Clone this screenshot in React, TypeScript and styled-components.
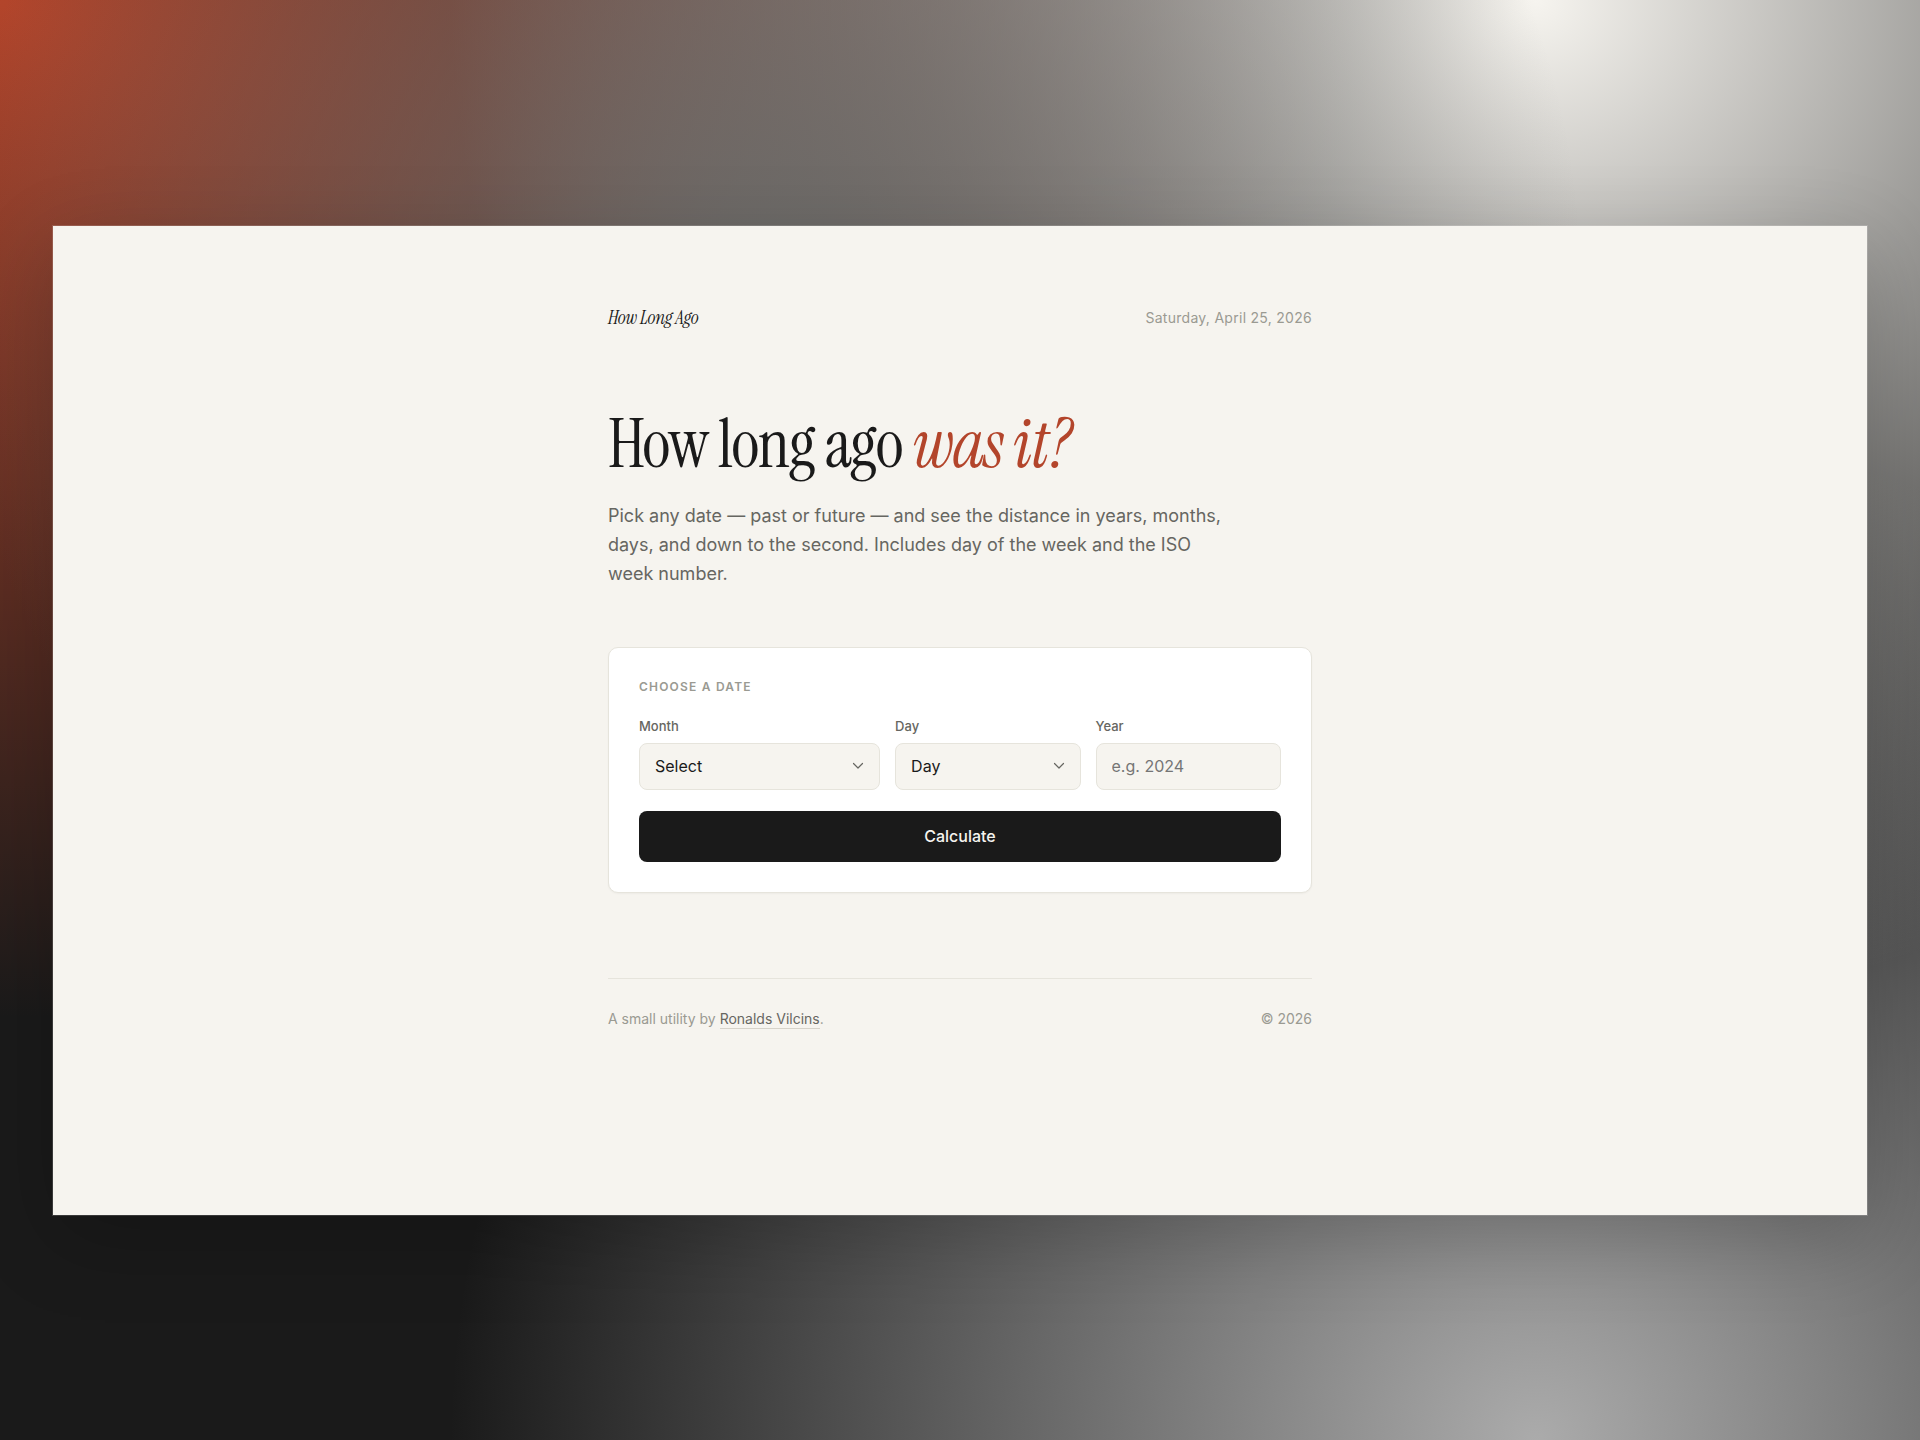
import React, { useState } from "react";
import styled, { createGlobalStyle } from "styled-components";

const ink = "#1a1a1a";
const paper = "#f6f4ef";
const accent = "#b3452b";
const muted = "#666661";
const faint = "#9a9a92";
const line = "#e6e4dc";
const sans = `Inter, "Liberation Sans", sans-serif`;
const serif = `"Instrument Serif", "Liberation Serif", serif`;

const GlobalStyle = createGlobalStyle`
  *, *::before, *::after { box-sizing: border-box; }
  body {
    margin: 0;
    font-family: ${sans};
    color: ${ink};
    -webkit-font-smoothing: antialiased;
  }
`;

const Backdrop = styled.div`
  min-height: 100vh;
  padding: 53px;
  display: grid;
  align-items: center;
  background-color: ${ink};
  background-image:
    radial-gradient(at 40% 20%, #6b6b69 0, transparent 50%),
    radial-gradient(at 80% 0%, ${paper} 0, transparent 50%),
    radial-gradient(at 80% 100%, #ababab 0, transparent 50%),
    radial-gradient(at 0% 0%, ${accent} 0, transparent 50%);
`;

const Sheet = styled.div`
  padding: 77px 32px 186px;
  background: ${paper};
  box-shadow:
    0 0 0 1px rgba(255, 255, 255, 0.15),
    0 24px 80px rgba(0, 0, 0, 0.2);
`;

const Column = styled.div`
  max-width: 704px;
  margin: 0 auto;
`;

const Header = styled.header`
  display: flex;
  justify-content: space-between;
  align-items: center;
  margin-bottom: 75px;
`;

const Brand = styled.span`
  font-family: ${serif};
  font-style: italic;
  font-size: 19px;
  line-height: 30px;
  letter-spacing: -0.01em;
`;

const Today = styled.time`
  font-size: 14px;
  line-height: 20px;
  letter-spacing: 0.02em;
  color: ${faint};
`;

const Title = styled.h1`
  margin: 0 0 21px;
  font-family: ${serif};
  font-weight: 400;
  font-size: 68px;
  line-height: 72px;
  letter-spacing: -0.02em;

  em {
    color: ${accent};
  }
`;

const Lead = styled.p`
  margin: 0 0 59px;
  max-width: 620px;
  font-size: 18px;
  line-height: 29px;
  color: ${muted};
`;

const Panel = styled.form`
  padding: 29px 30px 30px;
  background: #fff;
  border: 1px solid ${line};
  border-radius: 10px;
  box-shadow: 0 1px 2px rgba(0, 0, 0, 0.04);
`;

const Legend = styled.h2`
  margin: 0 0 19px;
  font-size: 12px;
  line-height: 20px;
  font-weight: 600;
  letter-spacing: 0.1em;
  text-transform: uppercase;
  color: ${faint};
`;

const Fields = styled.div`
  display: grid;
  grid-template-columns: 1.3fr 1fr 1fr;
  gap: 15px;
  margin-bottom: 21px;
`;

const Field = styled.div`
  display: flex;
  flex-direction: column;
  gap: 7px;
`;

const Label = styled.label`
  font-size: 13px;
  line-height: 20px;
  font-weight: 500;
  color: ${muted};
`;

const SelectWrap = styled.div`
  display: grid;
  align-items: center;

  > * {
    grid-area: 1 / 1;
  }
`;

const control = `
  width: 100%;
  height: 47px;
  padding: 0 15px;
  font: 400 16px/24px ${sans};
  color: ${ink};
  background: ${paper};
  border: 1px solid ${line};
  border-radius: 8px;
  appearance: none;
`;

const Select = styled.select`
  ${control}
`;

const Input = styled.input`
  ${control}

  &::placeholder {
    color: #757575;
    opacity: 1;
  }
`;

const Chevron = styled.svg`
  justify-self: end;
  margin-right: 16px;
  pointer-events: none;
`;

const Submit = styled.button`
  display: block;
  width: 100%;
  height: 51px;
  font: 500 16px/24px ${sans};
  color: ${paper};
  background: ${ink};
  border: 0;
  border-radius: 8px;
  cursor: pointer;
`;

const Footer = styled.footer`
  display: flex;
  justify-content: space-between;
  margin-top: 85px;
  padding-top: 30px;
  border-top: 1px solid ${line};
  font-size: 14px;
  line-height: 20px;
  color: ${faint};
`;

const Author = styled.a`
  padding-bottom: 1px;
  color: ${muted};
  text-decoration: none;
  border-bottom: 1px solid #d6d3ca;
`;

const months = [
  "January", "February", "March", "April", "May", "June",
  "July", "August", "September", "October", "November", "December",
];

const Arrow = () => (
  <Chevron width="12" height="12" viewBox="0 0 12 12" fill="none" aria-hidden="true">
    <path d="M1.5 3.5L6 8l4.500-4.500" stroke={muted} strokeWidth="1.2" strokeLinecap="round" strokeLinejoin="round" />
  </Chevron>
);

export default function App() {
  const [month, setMonth] = useState("");
  const [day, setDay] = useState("");
  const [year, setYear] = useState("");

  return (
    <>
      <GlobalStyle />
      <Backdrop>
        <Sheet>
          <Column>
            <Header>
              <Brand>How Long Ago</Brand>
              <Today dateTime="2026-04-25">Saturday, April 25, 2026</Today>
            </Header>
            <main>
              <Title>
                How long ago <em>was it?</em>
              </Title>
              <Lead>
                Pick any date — past or future — and see the distance in years, months, days, and down
                to the second. Includes day of the week and the ISO week number.
              </Lead>
              <Panel onSubmit={(e) => e.preventDefault()}>
                <Legend>Choose a date</Legend>
                <Fields>
                  <Field>
                    <Label htmlFor="month">Month</Label>
                    <SelectWrap>
                      <Select id="month" value={month} onChange={(e) => setMonth(e.target.value)}>
                        <option value="">Select</option>
                        {months.map((m) => (
                          <option key={m}>{m}</option>
                        ))}
                      </Select>
                      <Arrow />
                    </SelectWrap>
                  </Field>
                  <Field>
                    <Label htmlFor="day">Day</Label>
                    <SelectWrap>
                      <Select id="day" value={day} onChange={(e) => setDay(e.target.value)}>
                        <option value="">Day</option>
                        {Array.from({ length: 31 }, (_, i) => (
                          <option key={i}>{i + 1}</option>
                        ))}
                      </Select>
                      <Arrow />
                    </SelectWrap>
                  </Field>
                  <Field>
                    <Label htmlFor="year">Year</Label>
                    <Input
                      id="year"
                      inputMode="numeric"
                      placeholder="e.g. 2024"
                      value={year}
                      onChange={(e) => setYear(e.target.value)}
                    />
                  </Field>
                </Fields>
                <Submit type="submit">Calculate</Submit>
              </Panel>
            </main>
            <Footer>
              <span>
                A small utility by <Author href="#author">Ronalds Vilcins</Author>.
              </span>
              <span>© 2026</span>
            </Footer>
          </Column>
        </Sheet>
      </Backdrop>
    </>
  );
}
